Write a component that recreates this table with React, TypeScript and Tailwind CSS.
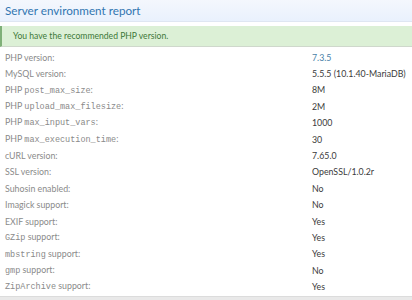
import type { ReactNode } from "react";

type Row = {
  label: ReactNode;
  value: string;
  accent?: boolean;
};

const Code = ({ children }: { children: ReactNode }) => (
  <span className="font-['Liberation_Mono','DejaVu_Sans_Mono',monospace] text-[8.5px]">
    {children}
  </span>
);

const rows: Row[] = [
  { label: "PHP version:", value: "7.3.5", accent: true },
  { label: "MySQL version:", value: "5.5.5 (10.1.40-MariaDB)" },
  { label: <>PHP <Code>post_max_size</Code>:</>, value: "8M" },
  { label: <>PHP <Code>upload_max_filesize</Code>:</>, value: "2M" },
  { label: <>PHP <Code>max_input_vars</Code>:</>, value: "1000" },
  { label: <>PHP <Code>max_execution_time</Code>:</>, value: "30" },
  { label: "cURL version:", value: "7.65.0" },
  { label: "SSL version:", value: "OpenSSL/1.0.2r" },
  { label: "Suhosin enabled:", value: "No" },
  { label: "Imagick support:", value: "No" },
  { label: "EXIF support:", value: "Yes" },
  { label: <><Code>GZip</Code> support:</>, value: "Yes" },
  { label: <><Code>mbstring</Code> support:</>, value: "Yes" },
  { label: <><Code>gmp</Code> support:</>, value: "No" },
  { label: <><Code>ZipArchive</Code> support:</>, value: "Yes" },
];

export default function App() {
  return (
    <div className="w-[412px] h-[300px] overflow-hidden bg-white font-['Lato','Open_Sans',sans-serif]">
      <div className="h-[22px] flex items-center px-[5px] bg-gradient-to-b from-[#f4f7fd] to-[#e9f1fd] border-b border-[#dfe6f2]">
        <h2 className="text-[11.7px] text-[#3276b1] leading-none">
          Server environment report
        </h2>
      </div>

      <div className="mt-[4px] h-[21px] flex items-center pl-[11px] bg-[#dcf0d6] border-l-2 border-[#7fb078] border-b border-b-[#cfd8cc] text-[8.6px] text-[#3c7838] whitespace-nowrap">
        You have the recommended PHP version.
      </div>

      <div className="mt-[2px] flex flex-col">
        {rows.map((row, i) => (
          <div key={i} className="h-[16.4px] flex items-center text-[8.8px] whitespace-nowrap">
            <div className="w-[312px] shrink-0 pl-[5px] text-[#8a8a8a]">{row.label}</div>
            <div className={row.accent ? "text-[#4a7fa8]" : "text-[#3a3a3a]"}>
              {row.value}
            </div>
          </div>
        ))}
      </div>

      <div className="mt-[1px] h-[10px] bg-[#e9e9e9] border-t border-[#dcdcdc]" />
    </div>
  );
}
